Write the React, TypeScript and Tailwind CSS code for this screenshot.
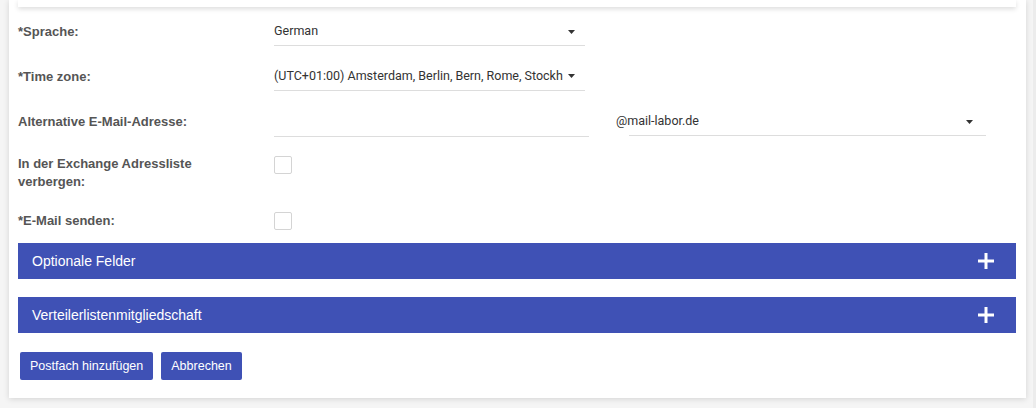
import React from "react";

const Caret = () => (
  <svg width="7" height="4" viewBox="0 0 7 4" className="shrink-0">
    <path d="M0 0 L7 0 L3.5 4 Z" fill="#333" />
  </svg>
);

const Plus = () => (
  <svg width="16" height="16" viewBox="0 0 16 16">
    <rect x="6.5" y="0" width="3" height="16" fill="#fff" />
    <rect x="0" y="6.5" width="16" height="3" fill="#fff" />
  </svg>
);

const Label = ({ children }: { children: React.ReactNode }) => (
  <div className="w-[256px] shrink-0 text-[13px] font-bold leading-[18px] text-[#555]">{children}</div>
);

const Checkbox = () => (
  <div className="h-[18px] w-[18px] rounded-[2px] border border-[#d4d4d4] bg-white" />
);

const Bar = ({ title }: { title: string }) => (
  <div className="flex h-[36px] items-center justify-between bg-[#3f51b5] pl-[14px] pr-[22px] text-[14px] text-white">
    <span>{title}</span>
    <Plus />
  </div>
);

export default function App() {
  return (
    <div className="relative h-[408px] w-[1036px] overflow-hidden bg-[#f5f5f5] font-['Liberation_Sans',Arial,sans-serif]">
      <div className="absolute right-0 top-0 h-full w-[3px] bg-[#ececec]" />
      <div className="ml-[9px] w-[1017px] bg-white pl-[9px] pr-[10px] pb-[18px] shadow-[0_1px_6px_rgba(0,0,0,0.14)]">
        <div className="h-[7px] bg-white shadow-[0_2px_5px_rgba(0,0,0,0.14)]" />

        <div className="mt-[11px] flex items-center">
          <Label>*Sprache:</Label>
          <div className="flex h-[28px] w-[311px] items-center justify-between border-b border-[#ddd] pr-[10px] font-['Roboto',sans-serif] text-[12.5px] text-[#333]">
            <span>German</span>
            <Caret />
          </div>
        </div>

        <div className="mt-[16px] flex items-center">
          <Label>*Time zone:</Label>
          <div className="flex h-[29px] w-[311px] items-center justify-between border-b border-[#ddd] pr-[10px] font-['Roboto',sans-serif] text-[12.5px] text-[#333]">
            <span className="w-[289px] overflow-hidden whitespace-nowrap">(UTC+01:00) Amsterdam, Berlin, Bern, Rome, Stockh</span>
            <Caret />
          </div>
        </div>

        <div className="mt-[16px] flex items-center">
          <Label>Alternative E-Mail-Adresse:</Label>
          <div className="h-[30px] w-[315px] border-b border-[#ddd]" />
          <div className="relative ml-[27px] h-[28px] w-[370px]">
            <div className="absolute left-[13px] right-0 top-[27px] h-px bg-[#ddd]" />
            <div className="flex h-[27px] items-center justify-between pr-[13px] font-['Roboto',sans-serif] text-[12.5px] text-[#333]">
              <span>@mail-labor.de</span>
              <Caret />
            </div>
          </div>
        </div>

        <div className="mt-[18px] flex items-start">
          <Label>
            In der Exchange Adressliste
            <br />
            verbergen:
          </Label>
          <div className="mt-[1px]">
            <Checkbox />
          </div>
        </div>

        <div className="mt-[21px] flex items-center">
          <Label>*E-Mail senden:</Label>
          <Checkbox />
        </div>

        <div className="mt-[13px]">
          <Bar title="Optionale Felder" />
        </div>
        <div className="mt-[18px]">
          <Bar title="Verteilerlistenmitgliedschaft" />
        </div>

        <div className="ml-[2px] mt-[19px] flex gap-[8px]">
          <button className="h-[28px] rounded-[2px] bg-[#3f51b5] px-[10px] text-[12.5px] text-white">
            Postfach hinzufügen
          </button>
          <button className="h-[28px] rounded-[2px] bg-[#3f51b5] px-[10px] text-[12.5px] text-white">
            Abbrechen
          </button>
        </div>
      </div>
    </div>
  );
}
